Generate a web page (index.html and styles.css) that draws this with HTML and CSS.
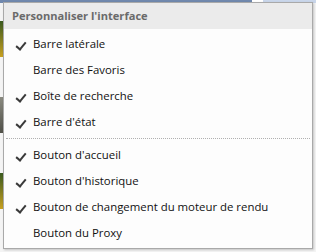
FILE: index.html
```html
<!DOCTYPE html>
<html lang="fr">
<head>
    <meta charset="UTF-8">
    <title>Personnaliser l'interface</title>
    <link rel="stylesheet" href="styles.css">
</head>
<body>
    <div class="backdrop">
        <div class="topbar">
            <div class="topbar-blue"></div>
            <div class="topbar-white"></div>
            <div class="topbar-light"></div>
        </div>
        <div class="side-strip">
            <div class="thumb thumb-green"></div>
            <div class="thumb thumb-gray"></div>
            <div class="thumb thumb-green"></div>
        </div>
    </div>

    <div class="menu">
        <div class="menu-header">Personnaliser l'interface</div>
        <div class="menu-list">
            <div class="menu-item checked">Barre latérale</div>
            <div class="menu-item">Barre des Favoris</div>
            <div class="menu-item checked">Boîte de recherche</div>
            <div class="menu-item checked">Barre d'état</div>
            <div class="menu-sep"></div>
            <div class="menu-item checked">Bouton d'accueil</div>
            <div class="menu-item checked">Bouton d'historique</div>
            <div class="menu-item checked">Bouton de changement du moteur de rendu</div>
            <div class="menu-item">Bouton du Proxy</div>
        </div>
    </div>
</body>
</html>
```

FILE: styles.css
```css
* {
    margin: 0;
    padding: 0;
    box-sizing: border-box;
}

body {
    width: 316px;
    height: 252px;
    overflow: hidden;
    background: #f4f4f4;
    font-family: 'Open Sans', sans-serif;
    position: relative;
}

.backdrop {
    height: 100%;
}

.topbar {
    display: flex;
    height: 3px;
}

.topbar-blue {
    width: 252px;
    background: #7088ad;
}

.topbar-white {
    width: 11px;
    background: #ffffff;
}

.topbar-light {
    flex: 1;
    background: #c9d6ea;
}

.side-strip {
    width: 3px;
    display: flex;
    flex-direction: column;
    gap: 40px;
    padding-top: 18px;
}

.thumb {
    height: 36px;
}

.thumb-green {
    background: linear-gradient(#3a5a20, #c8a020);
}

.thumb-gray {
    background: linear-gradient(#8a8a80, #505048);
}

/* menu contextuel par-dessus la page */
.menu {
    position: absolute;
    left: 3px;
    top: 2px;
    width: 310px;
    height: 247px;
    background: #fdfdfd;
    border: 1px solid #a9a9a9;
    box-shadow: 1px 1px 2px rgba(0, 0, 0, 0.2);
}

.menu-header {
    height: 26px;
    background: #ebebeb;
    color: #6a6a6a;
    font-weight: 700;
    font-size: 11.1px;
    line-height: 26px;
    padding-left: 8px;
}

.menu-list {
    padding-top: 2px;
}

.menu-item {
    height: 26px;
    line-height: 26px;
    font-size: 11.4px;
    color: #111;
    padding-left: 29px;
    position: relative;
}

.menu-item.checked::before {
    content: '';
    position: absolute;
    left: 14px;
    top: 9px;
    width: 4px;
    height: 8px;
    border-right: 2px solid #3a3a3a;
    border-bottom: 2px solid #3a3a3a;
    transform: rotate(40deg);
}

.menu-sep {
    height: 7px;
    margin: 0 2px;
    border-bottom: 1px dotted #b0b0b0;
    transform: translateY(-3px);
}
```
